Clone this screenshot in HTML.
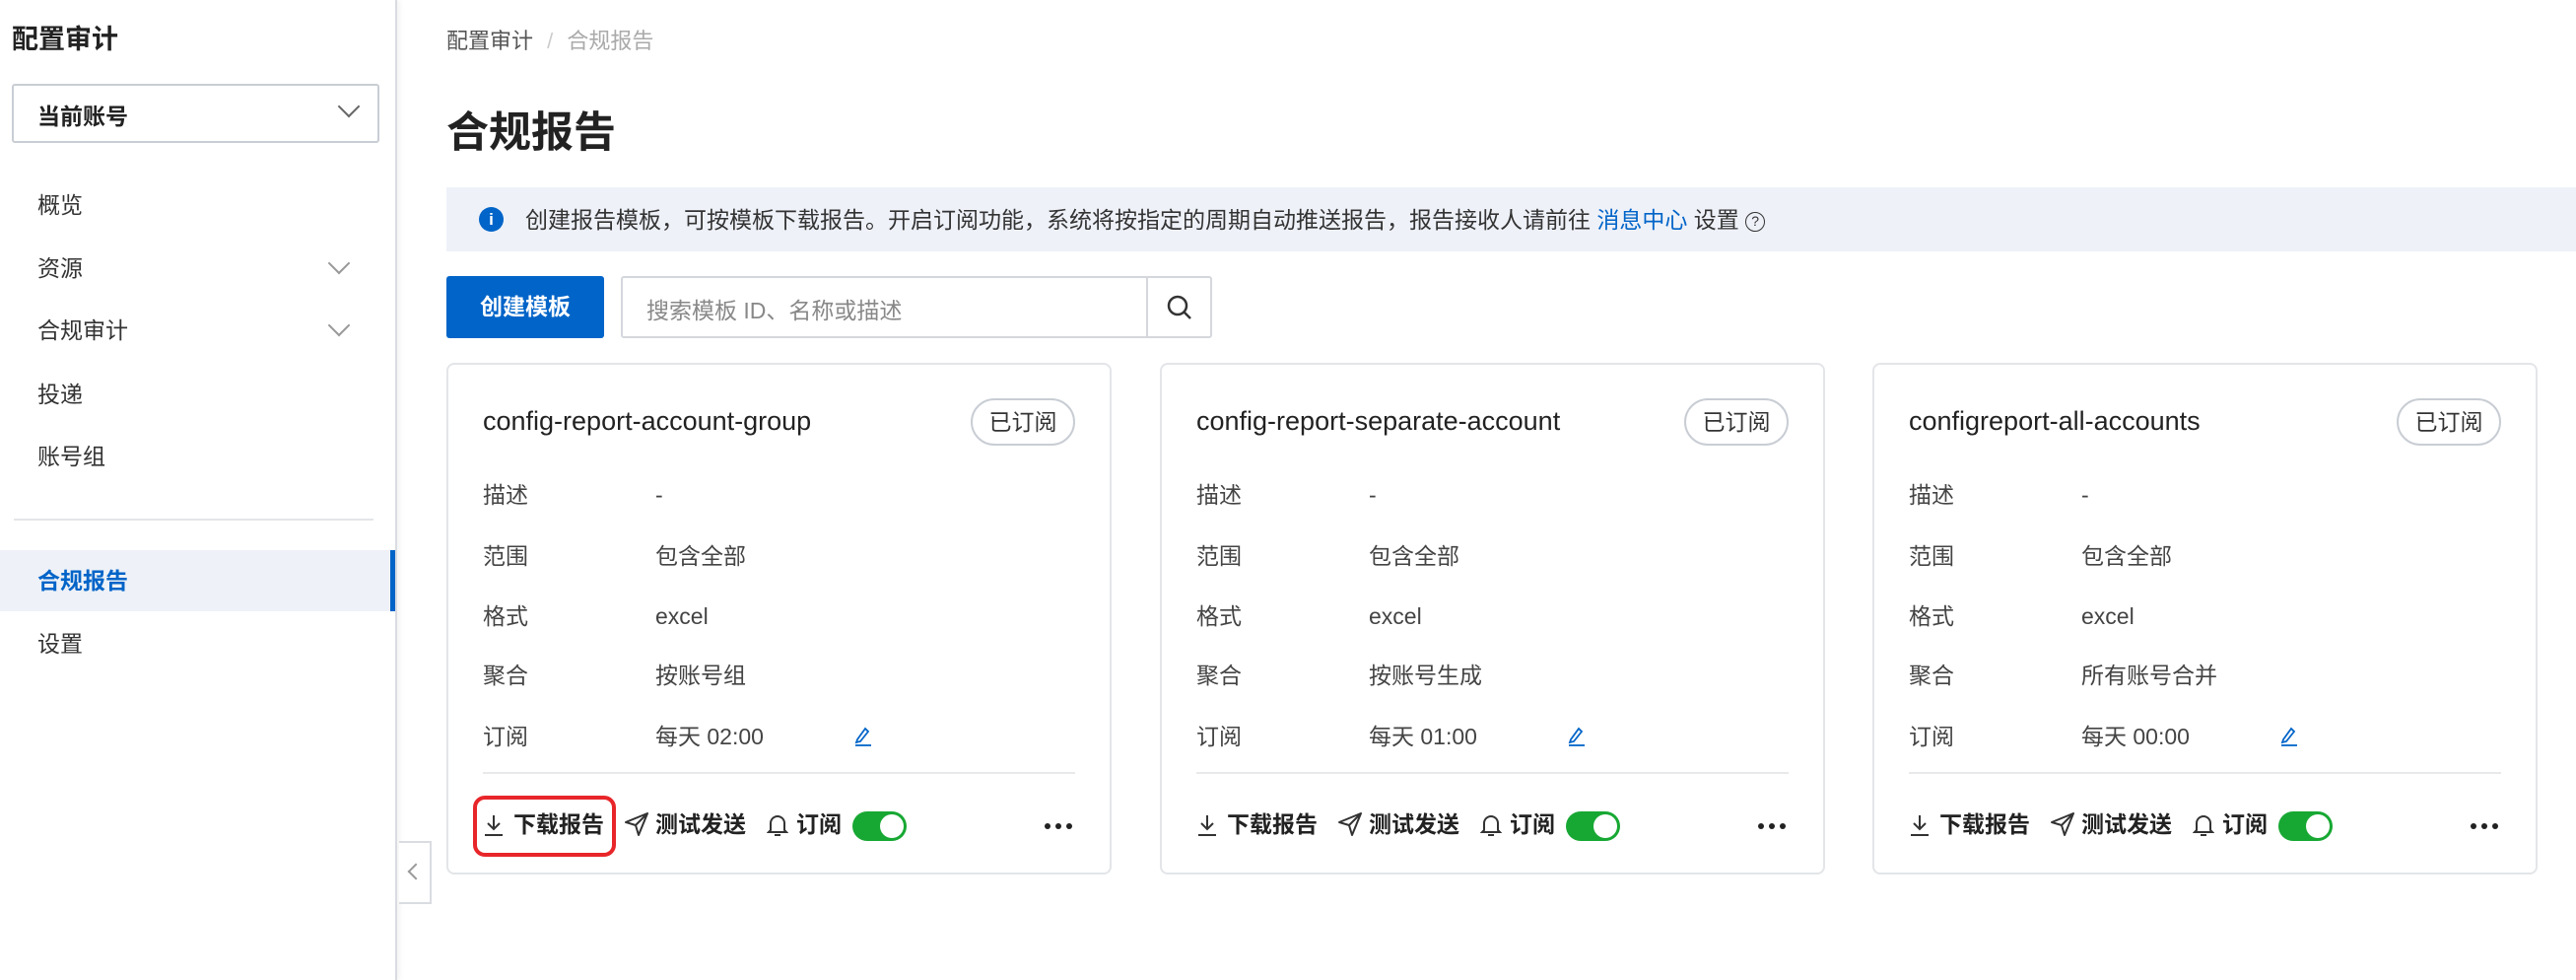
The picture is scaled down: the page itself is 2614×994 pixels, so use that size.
<!DOCTYPE html>
<html><head><meta charset="utf-8">
<style>
*{margin:0;padding:0;box-sizing:border-box}
body{width:2614px;height:994px;background:#fff;font-family:"Liberation Sans","Noto Sans CJK SC",sans-serif;color:#333;position:relative;overflow:hidden}
.a{position:absolute;white-space:nowrap}
.side{position:absolute;left:0;top:0;width:403px;height:994px;background:#fff;border-right:2px solid #d9dce1;box-shadow:2px 0 6px rgba(0,0,0,.06)}
.mi{position:absolute;left:38px;font-size:23px;color:#333;line-height:1}
.chev{position:absolute;width:16px;height:16px;border-right:2.5px solid #999;border-bottom:2.5px solid #999;transform:rotate(45deg)}
.card{position:absolute;top:368px;width:675px;height:519px;border:2px solid #e3e5e8;border-radius:8px;background:#fff}
.card .t{position:absolute;left:35px;top:44px;font-size:27px;color:#222;line-height:1}
.badge{position:absolute;right:35px;top:34px;width:106px;height:48px;border:2px solid #c9cdd4;border-radius:24px;font-size:23px;text-align:center;line-height:44px;color:#333}
.lb{position:absolute;left:35px;font-size:23px;color:#444;line-height:1}
.vl{position:absolute;left:210px;font-size:23px;color:#444;line-height:1}
.dv{position:absolute;left:35px;right:35px;top:413px;height:2px;background:#e8e9eb}
.ft{position:absolute;top:455px;font-size:23px;font-weight:700;color:#222;line-height:1}
.tg{position:absolute;left:410px;top:453px;width:55px;height:30px;border-radius:15px;background:#17a833}
.tg:after{content:"";position:absolute;right:3px;top:3px;width:24px;height:24px;border-radius:50%;background:#fff}
.dots{position:absolute;left:605px;top:465px;font-size:0}
.dots i{display:inline-block;width:6px;height:6px;border-radius:50%;background:#222;margin-right:5px}
</style></head><body>
<div class="side">
  <div class="a" style="left:12px;top:18px;font-size:27px;font-weight:700;color:#222">配置审计</div>
  <div class="a" style="left:12px;top:85px;width:373px;height:60px;border:2px solid #c9cdd4;border-radius:3px"></div>
  <div class="a" style="left:38px;top:99px;font-size:23px;font-weight:700;color:#222">当前账号</div>
  <div class="chev" style="left:346px;top:100px;border-color:#666"></div>
  <div class="mi" style="top:197px">概览</div>
  <div class="mi" style="top:261px">资源</div>
  <div class="chev" style="left:336px;top:259px"></div>
  <div class="mi" style="top:324px">合规审计</div>
  <div class="chev" style="left:336px;top:322px"></div>
  <div class="mi" style="top:389px">投递</div>
  <div class="mi" style="top:452px">账号组</div>
  <div class="a" style="left:14px;top:526px;width:365px;height:2px;background:#e3e5e8"></div>
  <div class="a" style="left:0;top:558px;width:401px;height:62px;background:#eef1f7;border-right:5px solid #0064c8"></div>
  <div class="mi" style="top:578px;color:#0064c8;font-weight:700">合规报告</div>
  <div class="mi" style="top:642px">设置</div>
</div>
<div class="a" style="left:405px;top:853px;width:33px;height:64px;border:2px solid #d9dce1;border-left:none;background:#fff"></div>
<div class="a" style="left:416px;top:878px;width:12px;height:12px;border-left:2px solid #999;border-bottom:2px solid #999;transform:rotate(45deg)"></div>

<div class="a" style="left:453px;top:24px;font-size:22px;color:#555">配置审计 <span style="color:#ccc;margin:0 8px">/</span> <span style="color:#aaa">合规报告</span></div>
<div class="a" style="left:453px;top:100px;font-size:43px;font-weight:700;color:#222">合规报告</div>

<div class="a" style="left:453px;top:190px;width:2161px;height:65px;background:#eef1f8"></div>
<div class="a" style="left:486px;top:210px;width:25px;height:25px;border-radius:50%;background:#0064c8;color:#fff;font-size:17px;font-weight:700;text-align:center;line-height:25px">i</div>
<div class="a" style="left:533px;top:204px;font-size:23px;color:#333">创建报告模板，可按模板下载报告。开启订阅功能，系统将按指定的周期自动推送报告，报告接收人请前往 <span style="color:#0064c8">消息中心</span> 设置 <span style="display:inline-block;width:20px;height:20px;border:1.5px solid #333;border-radius:50%;font-size:14px;text-align:center;line-height:17px;vertical-align:2px">?</span></div>

<div class="a" style="left:453px;top:280px;width:160px;height:63px;background:#0064c8;border-radius:3px;color:#fff;font-size:23px;font-weight:700;text-align:center;line-height:63px">创建模板</div>
<div class="a" style="left:630px;top:280px;width:600px;height:63px;border:2px solid #d4d7dc;border-radius:3px"></div>
<div class="a" style="left:1163px;top:282px;width:2px;height:59px;background:#d4d7dc"></div>
<div class="a" style="left:656px;top:296px;font-size:23px;color:#888">搜索模板 ID、名称或描述</div>
<svg class="a" style="left:1182px;top:297px" width="30" height="30" viewBox="0 0 30 30"><circle cx="13" cy="13" r="9" fill="none" stroke="#333" stroke-width="2.5"/><line x1="19.5" y1="19.5" x2="26" y2="26" stroke="#333" stroke-width="2.5"/></svg>

<div class="card" style="left:453px">
  <div class="t">config-report-account-group</div><div class="badge">已订阅</div>
  <div class="lb" style="top:121px">描述</div><div class="vl" style="top:121px">-</div>
  <div class="lb" style="top:183px">范围</div><div class="vl" style="top:183px">包含全部</div>
  <div class="lb" style="top:244px">格式</div><div class="vl" style="top:244px">excel</div>
  <div class="lb" style="top:304px">聚合</div><div class="vl" style="top:304px">按账号组</div>
  <div class="lb" style="top:366px">订阅</div><div class="vl" style="top:366px">每天 02:00</div>
  <svg class="a" style="left:410px;top:365px" width="22" height="22" viewBox="0 0 22 22"><path d="M5 15 L13 4 L16 7 L8 17 L4 18 Z" fill="none" stroke="#0064c8" stroke-width="1.8"/><line x1="3" y1="21" x2="19" y2="21" stroke="#0064c8" stroke-width="1.8"/></svg>
  <div class="dv"></div>
  <svg class="a" style="left:35px;top:455px" width="22" height="24" viewBox="0 0 22 24"><path d="M11 2 V16 M5 10 L11 16 L17 10 M2 22 H20" fill="none" stroke="#333" stroke-width="2"/></svg>
  <div class="ft" style="left:66px">下载报告</div>
  <svg class="a" style="left:178px;top:453px" width="26" height="26" viewBox="0 0 26 26"><path d="M2 11 L24 2 L15 24 L12 14 Z M12 14 L24 2" fill="none" stroke="#333" stroke-width="2" stroke-linejoin="round"/></svg>
  <div class="ft" style="left:210px">测试发送</div>
  <svg class="a" style="left:323px;top:454px" width="22" height="26" viewBox="0 0 22 26"><path d="M4 18 V11 A7 7 0 0 1 18 11 V18 L20 20 H2 Z M8 23 H14" fill="none" stroke="#333" stroke-width="2"/></svg>
  <div class="ft" style="left:353px">订阅</div>
  <div class="tg"></div>
  <div class="dots"><i></i><i></i><i></i></div>
  <div class="a" style="left:25px;top:437px;width:145px;height:62px;border:4px solid #e8262a;border-radius:12px"></div>
</div>

<div class="card" style="left:1177px">
  <div class="t">config-report-separate-account</div><div class="badge">已订阅</div>
  <div class="lb" style="top:121px">描述</div><div class="vl" style="top:121px">-</div>
  <div class="lb" style="top:183px">范围</div><div class="vl" style="top:183px">包含全部</div>
  <div class="lb" style="top:244px">格式</div><div class="vl" style="top:244px">excel</div>
  <div class="lb" style="top:304px">聚合</div><div class="vl" style="top:304px">按账号生成</div>
  <div class="lb" style="top:366px">订阅</div><div class="vl" style="top:366px">每天 01:00</div>
  <svg class="a" style="left:410px;top:365px" width="22" height="22" viewBox="0 0 22 22"><path d="M5 15 L13 4 L16 7 L8 17 L4 18 Z" fill="none" stroke="#0064c8" stroke-width="1.8"/><line x1="3" y1="21" x2="19" y2="21" stroke="#0064c8" stroke-width="1.8"/></svg>
  <div class="dv"></div>
  <svg class="a" style="left:35px;top:455px" width="22" height="24" viewBox="0 0 22 24"><path d="M11 2 V16 M5 10 L11 16 L17 10 M2 22 H20" fill="none" stroke="#333" stroke-width="2"/></svg>
  <div class="ft" style="left:66px">下载报告</div>
  <svg class="a" style="left:178px;top:453px" width="26" height="26" viewBox="0 0 26 26"><path d="M2 11 L24 2 L15 24 L12 14 Z M12 14 L24 2" fill="none" stroke="#333" stroke-width="2" stroke-linejoin="round"/></svg>
  <div class="ft" style="left:210px">测试发送</div>
  <svg class="a" style="left:323px;top:454px" width="22" height="26" viewBox="0 0 22 26"><path d="M4 18 V11 A7 7 0 0 1 18 11 V18 L20 20 H2 Z M8 23 H14" fill="none" stroke="#333" stroke-width="2"/></svg>
  <div class="ft" style="left:353px">订阅</div>
  <div class="tg"></div>
  <div class="dots"><i></i><i></i><i></i></div>
</div>

<div class="card" style="left:1900px">
  <div class="t">configreport-all-accounts</div><div class="badge">已订阅</div>
  <div class="lb" style="top:121px">描述</div><div class="vl" style="top:121px">-</div>
  <div class="lb" style="top:183px">范围</div><div class="vl" style="top:183px">包含全部</div>
  <div class="lb" style="top:244px">格式</div><div class="vl" style="top:244px">excel</div>
  <div class="lb" style="top:304px">聚合</div><div class="vl" style="top:304px">所有账号合并</div>
  <div class="lb" style="top:366px">订阅</div><div class="vl" style="top:366px">每天 00:00</div>
  <svg class="a" style="left:410px;top:365px" width="22" height="22" viewBox="0 0 22 22"><path d="M5 15 L13 4 L16 7 L8 17 L4 18 Z" fill="none" stroke="#0064c8" stroke-width="1.8"/><line x1="3" y1="21" x2="19" y2="21" stroke="#0064c8" stroke-width="1.8"/></svg>
  <div class="dv"></div>
  <svg class="a" style="left:35px;top:455px" width="22" height="24" viewBox="0 0 22 24"><path d="M11 2 V16 M5 10 L11 16 L17 10 M2 22 H20" fill="none" stroke="#333" stroke-width="2"/></svg>
  <div class="ft" style="left:66px">下载报告</div>
  <svg class="a" style="left:178px;top:453px" width="26" height="26" viewBox="0 0 26 26"><path d="M2 11 L24 2 L15 24 L12 14 Z M12 14 L24 2" fill="none" stroke="#333" stroke-width="2" stroke-linejoin="round"/></svg>
  <div class="ft" style="left:210px">测试发送</div>
  <svg class="a" style="left:323px;top:454px" width="22" height="26" viewBox="0 0 22 26"><path d="M4 18 V11 A7 7 0 0 1 18 11 V18 L20 20 H2 Z M8 23 H14" fill="none" stroke="#333" stroke-width="2"/></svg>
  <div class="ft" style="left:353px">订阅</div>
  <div class="tg"></div>
  <div class="dots"><i></i><i></i><i></i></div>
</div>
</body></html>
